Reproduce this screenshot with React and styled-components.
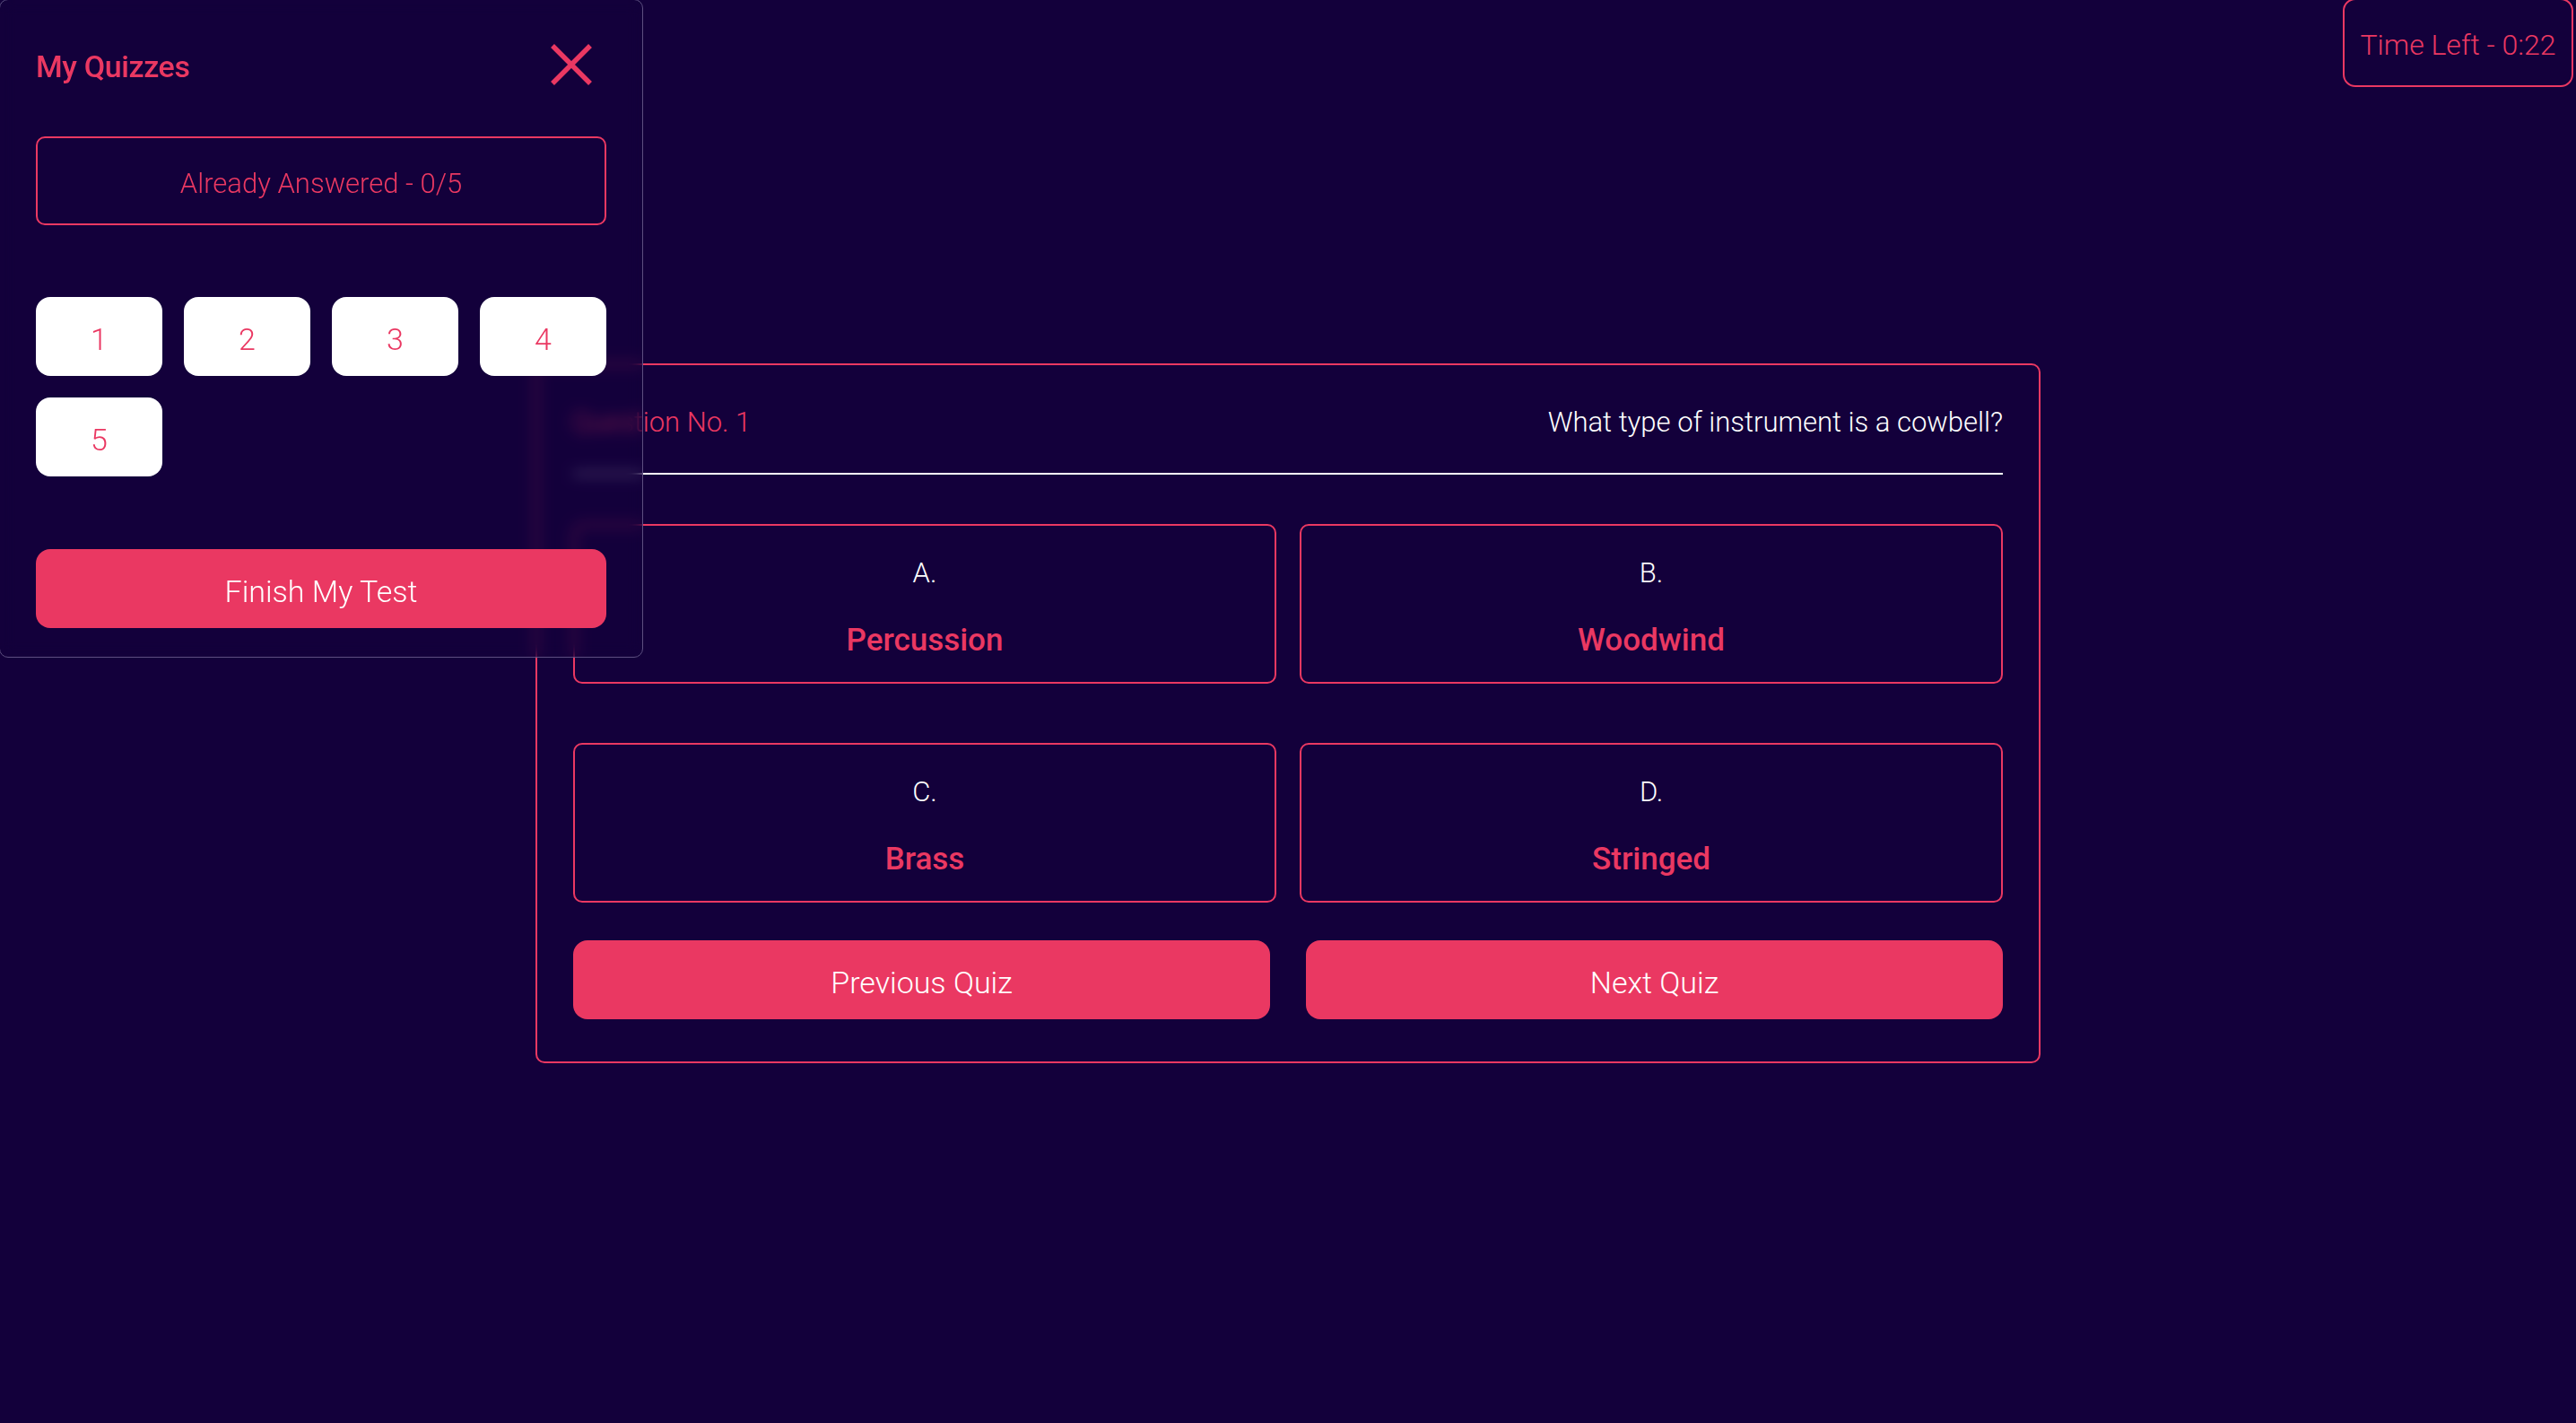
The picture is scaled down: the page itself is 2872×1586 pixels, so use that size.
import styled, { createGlobalStyle } from 'styled-components';

const PINK = '#ea3862';
const BG = '#13003b';

const GlobalStyle = createGlobalStyle`
  * {
    box-sizing: border-box;
  }
  body {
    margin: 0;
    background: ${BG};
    font-family: Roboto, "Noto Sans", sans-serif;
  }
`;

const QUESTIONS = [
  {
    text: 'What type of instrument is a cowbell?',
    answers: ['Percussion', 'Woodwind', 'Brass', 'Stringed'],
  },
];

const Page = styled.div`
  min-height: 100vh;
  display: grid;
  grid-template-rows: 99px 1fr 95px;
  background: ${BG};
`;

const TopBar = styled.header`
  display: flex;
  justify-content: flex-end;
  align-items: flex-start;
  padding-right: 3px;
`;

const Timer = styled.div`
  width: 257px;
  height: 99px;
  margin-top: -2px;
  padding-top: 5px;
  border: 2px solid ${PINK};
  border-radius: 14px;
  display: flex;
  align-items: center;
  justify-content: center;
  color: ${PINK};
  font-size: 32px;
  font-weight: 300;
`;

const Stage = styled.main`
  display: flex;
  align-items: center;
  justify-content: center;
`;

const Card = styled.section`
  width: 1678px;
  border: 2px solid ${PINK};
  border-radius: 10px;
  padding: 0 40px 47px;
`;

const CardHeader = styled.div`
  height: 122px;
  padding-top: 6px;
  display: flex;
  align-items: center;
  justify-content: space-between;
  border-bottom: 2px solid #ffffff;
  font-size: 31px;
  font-weight: 300;
`;

const QuestionNo = styled.span`
  color: ${PINK};
  margin-left: -2px;
`;

const QuestionText = styled.span`
  color: #ffffff;
`;

const Options = styled.div`
  margin-top: 55px;
  display: grid;
  grid-template-columns: 1fr 1fr;
  column-gap: 26px;
  row-gap: 66px;
`;

const Option = styled.button`
  height: 178px;
  background: transparent;
  border: 2px solid ${PINK};
  border-radius: 10px;
  display: flex;
  flex-direction: column;
  align-items: center;
  justify-content: center;
  gap: 33px;
  font-family: inherit;
  cursor: pointer;
  padding: 9px 0 0;
`;

const Letter = styled.span`
  color: #ffffff;
  font-size: 31px;
  font-weight: 300;
  line-height: 40px;
`;

const AnswerText = styled.span`
  color: ${PINK};
  font-size: 35px;
  font-weight: 500;
  line-height: 44px;
`;

const NavRow = styled.div`
  margin-top: 42px;
  display: grid;
  grid-template-columns: 1fr 1fr;
  column-gap: 40px;
`;

const PinkButton = styled.button`
  height: 88px;
  width: 100%;
  padding: 5px 0 0;
  border: none;
  border-radius: 16px;
  background: ${PINK};
  color: #ffffff;
  font-family: inherit;
  font-size: 34px;
  font-weight: 300;
  cursor: pointer;
`;

const Drawer = styled.aside`
  position: fixed;
  top: -1px;
  left: -1px;
  width: 718px;
  padding: 48px 40px 32px 40px;
  border: 1px solid #5d4f80;
  border-radius: 10px;
  background: rgba(19, 0, 59, 0.45);
  backdrop-filter: blur(8px);
  -webkit-backdrop-filter: blur(8px);
`;

const DrawerHeader = styled.div`
  height: 47px;
  display: flex;
  align-items: center;
  justify-content: space-between;
`;

const DrawerTitle = styled.h2`
  margin: 0;
  padding-top: 5px;
  color: ${PINK};
  font-size: 34px;
  font-weight: 500;
  letter-spacing: -0.4px;
`;

const CloseButton = styled.button`
  width: 47px;
  height: 47px;
  margin-right: 16px;
  padding: 0;
  border: none;
  background: transparent;
  cursor: pointer;
  display: flex;
  align-items: center;
  justify-content: center;
`;

const AnsweredBox = styled.div`
  margin-top: 57px;
  height: 99px;
  padding-top: 5px;
  border: 2px solid ${PINK};
  border-radius: 10px;
  display: flex;
  align-items: center;
  justify-content: center;
  color: ${PINK};
  font-size: 31px;
  font-weight: 300;
`;

const NumberGrid = styled.div`
  margin-top: 80px;
  display: grid;
  grid-template-columns: repeat(4, 1fr);
  gap: 24px;
`;

const NumberButton = styled.button`
  height: 88px;
  padding: 5px 0 0;
  border: none;
  border-radius: 16px;
  background: #ffffff;
  color: ${PINK};
  font-family: inherit;
  font-size: 34px;
  font-weight: 300;
  cursor: pointer;
`;

const FinishButton = styled(PinkButton)`
  margin-top: 81px;
`;

function CloseIcon() {
  return (
    <svg width="46" height="46" viewBox="0 0 46 46">
      <path d="M2 2 L44 44 M44 2 L2 44" stroke={PINK} strokeWidth="5.5" fill="none" />
    </svg>
  );
}

export default function App() {
  const quiz = QUESTIONS[0];
  const letters = ['A.', 'B.', 'C.', 'D.'];

  return (
    <>
      <GlobalStyle />
      <Page>
        <TopBar>
          <Timer>Time Left - 0:22</Timer>
        </TopBar>
        <Stage>
          <Card>
            <CardHeader>
              <QuestionNo>Question No. 1</QuestionNo>
              <QuestionText>{quiz.text}</QuestionText>
            </CardHeader>
            <Options>
              {quiz.answers.map((a, i) => (
                <Option key={a}>
                  <Letter>{letters[i]}</Letter>
                  <AnswerText>{a}</AnswerText>
                </Option>
              ))}
            </Options>
            <NavRow>
              <PinkButton>Previous Quiz</PinkButton>
              <PinkButton>Next Quiz</PinkButton>
            </NavRow>
          </Card>
        </Stage>
        <div />
      </Page>
      <Drawer>
        <DrawerHeader>
          <DrawerTitle>My Quizzes</DrawerTitle>
          <CloseButton aria-label="Close">
            <CloseIcon />
          </CloseButton>
        </DrawerHeader>
        <AnsweredBox>Already Answered - 0/5</AnsweredBox>
        <NumberGrid>
          {[1, 2, 3, 4, 5].map(n => (
            <NumberButton key={n}>{n}</NumberButton>
          ))}
        </NumberGrid>
        <FinishButton>Finish My Test</FinishButton>
      </Drawer>
    </>
  );
}
